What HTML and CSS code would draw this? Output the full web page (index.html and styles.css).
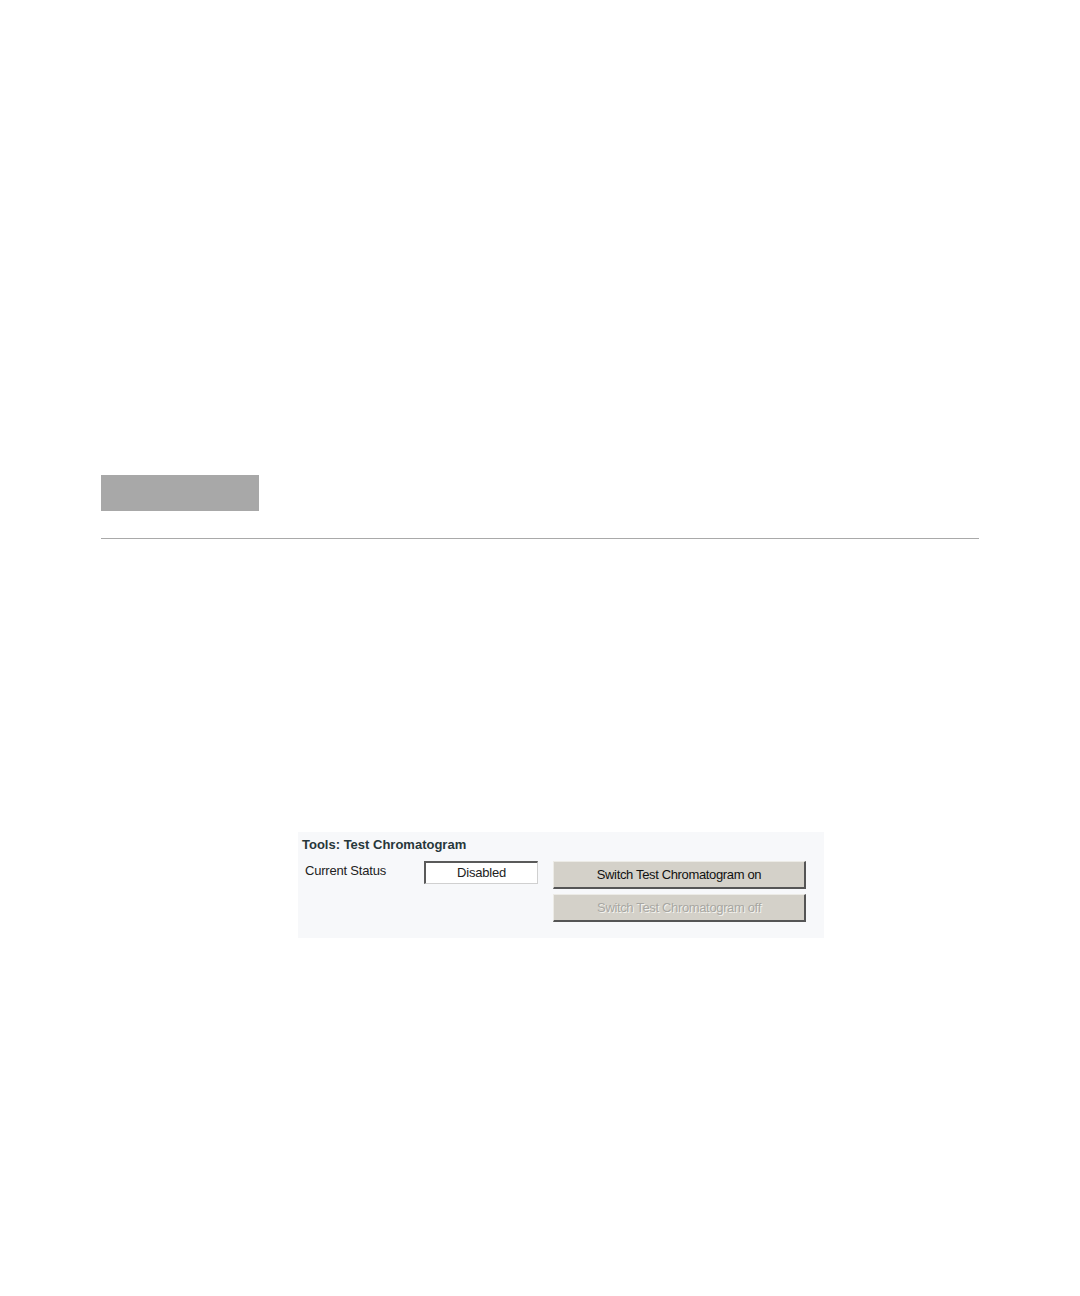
FILE: index.html
```html
<!DOCTYPE html>
<html>
<head>
<meta charset="utf-8">
<link rel="stylesheet" href="styles.css">
</head>
<body>
<div class="page">
  <div class="tab"></div>
  <div class="rule"></div>
  <div class="panel">
    <div class="title">Tools: Test Chromatogram</div>
    <div class="row">
      <div class="label">Current Status</div>
      <div class="status">Disabled</div>
      <div class="buttons">
        <div class="btn">Switch Test Chromatogram on</div>
        <div class="btn disabled">Switch Test Chromatogram off</div>
      </div>
    </div>
  </div>
</div>
</body>
</html>
```
FILE: styles.css
```css
html, body {
  margin: 0;
  padding: 0;
  background: #ffffff;
}
.page {
  width: 1080px;
  height: 1296px;
  padding-top: 475px;
  box-sizing: border-box;
  font-family: "Liberation Sans", Arial, sans-serif;
}
.tab {
  margin-left: 101px;
  width: 158px;
  height: 36px;
  background: #a8a8a8;
}
.rule {
  margin: 27px 0 0 101px;
  width: 878px;
  height: 1px;
  background: #a9a9a9;
}
.panel {
  margin: 293px 0 0 298px;
  width: 526px;
  height: 106px;
  background: #f7f8fa;
  box-sizing: border-box;
  padding: 5px 0 0 4px;
}
.title {
  font-weight: bold;
  font-size: 13px;
  color: #27373a;
  letter-spacing: 0;
  line-height: 15px;
}
.row {
  display: flex;
  margin-top: 9px;
}
.label {
  width: 119px;
  padding-left: 3px;
  font-size: 13px;
  color: #222;
  line-height: 14px;
  padding-top: 3px;
  letter-spacing: -0.2px;
}
.status {
  width: 114px;
  height: 23px;
  box-sizing: border-box;
  background: #fff;
  border-top: 2px solid #5a5a5a;
  border-left: 2px solid #5a5a5a;
  border-right: 1px solid #d0d0d0;
  border-bottom: 1px solid #d0d0d0;
  font-size: 13px;
  text-align: center;
  line-height: 19px;
  color: #222;
  letter-spacing: -0.2px;
}
.buttons {
  margin-left: 15px;
  display: flex;
  flex-direction: column;
  gap: 5px;
}
.btn {
  width: 253px;
  height: 28px;
  box-sizing: border-box;
  background: #d4d1c9;
  border-top: 1px solid #ecebe6;
  border-left: 1px solid #ecebe6;
  border-right: 2px solid #555;
  border-bottom: 2px solid #555;
  font-size: 13px;
  text-align: center;
  line-height: 25px;
  color: #111;
  letter-spacing: -0.35px;
}
.btn.disabled {
  color: #a8a7a2;
  text-shadow: 1px 1px 0 #f4f4f0;
}
```
